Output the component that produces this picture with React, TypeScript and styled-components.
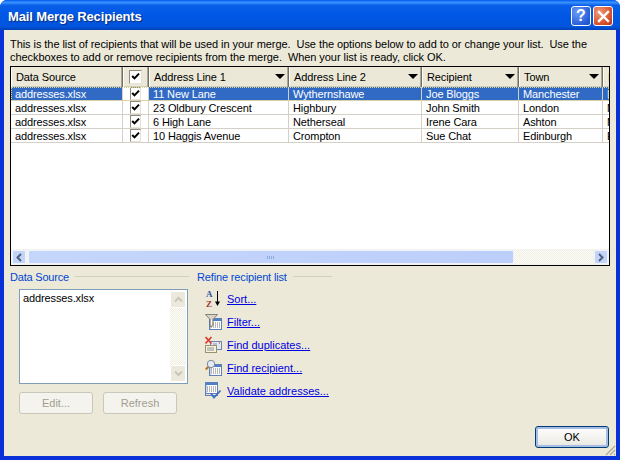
import React from 'react';
import styled, { createGlobalStyle } from 'styled-components';

const GlobalStyle = createGlobalStyle`
  html, body { margin: 0; padding: 0; background: #fff; }
  * { box-sizing: border-box; }
`;

type Col = { label: string; width: number; sort?: boolean };

const columns: Col[] = [
  { label: 'Data Source', width: 112 },
  { label: '', width: 26 },
  { label: 'Address Line 1', width: 140, sort: true },
  { label: 'Address Line 2', width: 133, sort: true },
  { label: 'Recipient', width: 97, sort: true },
  { label: 'Town', width: 84, sort: true },
  { label: 'I', width: 6 },
];

const rows = [
  ['addresses.xlsx', '11 New Lane', 'Wythernshawe', 'Joe Bloggs', 'Manchester', 'M'],
  ['addresses.xlsx', '23 Oldbury Crescent', 'Highbury', 'John Smith', 'London', 'M'],
  ['addresses.xlsx', '6 High Lane', 'Netherseal', 'Irene Cara', 'Ashton', 'M'],
  ['addresses.xlsx', '10 Haggis Avenue', 'Crompton', 'Sue Chat', 'Edinburgh', 'E'],
];

const Check = () => (
  <svg width="9" height="9" viewBox="0 0 9 9">
    <path d="M1.2 4l2.3 2.4L8 1.6" fill="none" stroke="#000" strokeWidth="2" />
  </svg>
);

const Arrow = () => (
  <svg width="10" height="5" viewBox="0 0 10 5">
    <path d="M0 0h10L5 5z" fill="#000" />
  </svg>
);

const SortIcon = () => (
  <svg width="18" height="18" viewBox="0 0 18 18">
    <text x="1" y="7" fontFamily="Liberation Serif" fontWeight="700" fontSize="9" fill="#2f55a8">A</text>
    <text x="1" y="17" fontFamily="Liberation Serif" fontWeight="700" fontSize="9" fill="#a33a30">Z</text>
    <path d="M12.5 1v13" stroke="#000" strokeWidth="1" />
    <path d="M10 11.5h5L12.5 16z" fill="#000" />
  </svg>
);

const Sheet = ({ x = 4, y = 5 }: { x?: number; y?: number }) => (
  <g transform={`translate(${x} ${y})`}>
    <rect x="0.5" y="0.5" width="12" height="11" fill="#fff" stroke="#5f7fb8" />
    <rect x="1" y="1" width="11" height="2" fill="#4f7fc8" />
    <path d="M2 5h10M2 7h10M2 9h10" stroke="#6d6d6d" strokeDasharray="1 1" />
    <rect x="1" y="3" width="1" height="8" fill="#c5d4ea" />
  </g>
);

const FilterIcon = () => (
  <svg width="18" height="18" viewBox="0 0 18 18">
    <Sheet />
    <path d="M0.5 1.5h12L8 6.5v6L5 14V6.5z" fill="#d6d3c8" stroke="#6f6c62" strokeWidth="0.8" />
    <path d="M6.5 7v5" stroke="#fff" />
  </svg>
);

const DuplicatesIcon = () => (
  <svg width="18" height="18" viewBox="0 0 18 18">
    <rect x="5.5" y="5.5" width="11" height="8" fill="#dfe8f6" stroke="#6f85ad" />
    <rect x="0.5" y="9.5" width="11" height="7" fill="#f7f1d8" stroke="#9a8f6e" />
    <path d="M2 12h7M2 14h7" stroke="#8d93a0" />
    <path d="M8 8h4" stroke="#8d93a0" />
    <path d="M14 7h1" stroke="#c22" />
    <path d="M0.5 1l6 6.5M6.5 1l-6 6.5" stroke="#dd3b2c" strokeWidth="1.7" />
  </svg>
);

const FindIcon = () => (
  <svg width="18" height="18" viewBox="0 0 18 18">
    <Sheet />
    <circle cx="6" cy="5" r="3.7" fill="#e4edf5" stroke="#7c8896" />
    <path d="M3.4 7.8L0.8 10.5" stroke="#b5762e" strokeWidth="2.2" />
  </svg>
);

const ValidateIcon = () => (
  <svg width="18" height="18" viewBox="0 0 18 18">
    <Sheet x={0} y={0} />
    <rect x="0.5" y="0.5" width="12" height="13" fill="none" stroke="#5f7fb8" />
    <path d="M6 11.5l3 4 6.5-7" fill="none" stroke="#3f6fc0" strokeWidth="1.8" />
  </svg>
);

const links = [
  { label: 'Sort...', icon: <SortIcon /> },
  { label: 'Filter...', icon: <FilterIcon /> },
  { label: 'Find duplicates...', icon: <DuplicatesIcon /> },
  { label: 'Find recipient...', icon: <FindIcon /> },
  { label: 'Validate addresses...', icon: <ValidateIcon /> },
];

const App = () => (
  <>
    <GlobalStyle />
    <Frame>
      <TitleBar>
        <Title>Mail Merge Recipients</Title>
        <HelpButton>?</HelpButton>
        <CloseButton>
          <svg width="13" height="13" viewBox="0 0 13 13">
            <path d="M2 2l9 9M11 2l-9 9" stroke="#fff" strokeWidth="2.4" strokeLinecap="square" />
          </svg>
        </CloseButton>
      </TitleBar>
      <Body>
        <Intro>
          This is the list of recipients that will be used in your merge.&nbsp; Use the options below to add to or change your list.&nbsp; Use the
          <br />
          checkboxes to add or remove recipients from the merge.&nbsp; When your list is ready, click OK.
        </Intro>
        <Grid>
          <HeaderRow>
            {columns.map((c, i) => (
              <HeaderCell key={i} $w={c.width}>
                {i === 1 ? <CheckBox $raised><Check /></CheckBox> : <span>{c.label}</span>}
                {c.sort && <Arrow />}
              </HeaderCell>
            ))}
          </HeaderRow>
          <RowList>
            {rows.map((r, i) => (
              <Row key={i} $selected={i === 0}>
                <Cell $w={columns[0].width}>{r[0]}</Cell>
                <CheckCell $w={columns[1].width}><CheckBox><Check /></CheckBox></CheckCell>
                {r.slice(1).map((v, j) => (
                  <Cell key={j} $w={columns[j + 2].width}>{v}</Cell>
                ))}
              </Row>
            ))}
          </RowList>
          <HScroll>
            <ScrollBtn><svg width="8" height="9" viewBox="0 0 8 9"><path d="M6 1L2.5 4.5 6 8" fill="none" stroke="#4d6185" strokeWidth="2" /></svg></ScrollBtn>
            <Thumb><Grip /></Thumb>
            <Track />
            <ScrollBtn><svg width="8" height="9" viewBox="0 0 8 9"><path d="M2 1l3.5 3.5L2 8" fill="none" stroke="#4d6185" strokeWidth="2" /></svg></ScrollBtn>
          </HScroll>
        </Grid>
        <Lower>
          <SourcePane>
            <GroupHead $line={114} $tight={0.2}>Data Source</GroupHead>
            <ListBox>
              <ListText>addresses.xlsx</ListText>
              <VScroll>
                <VBtn><svg width="9" height="7" viewBox="0 0 9 7"><path d="M1 5.5L4.5 2 8 5.5" fill="none" stroke="#c8c6ba" strokeWidth="2" /></svg></VBtn>
                <VTrack />
                <VBtn><svg width="9" height="7" viewBox="0 0 9 7"><path d="M1 1.5L4.5 5 8 1.5" fill="none" stroke="#c8c6ba" strokeWidth="2" /></svg></VBtn>
              </VScroll>
            </ListBox>
            <ButtonRow>
              <DisabledButton>Edit...</DisabledButton>
              <DisabledButton>Refresh</DisabledButton>
            </ButtonRow>
          </SourcePane>
          <RefinePane>
            <GroupHead $line={39} $tight={0.15}>Refine recipient list</GroupHead>
            <LinkList>
              {links.map((l) => (
                <LinkRow key={l.label}>
                  {l.icon}
                  <LinkText href="#">{l.label}</LinkText>
                </LinkRow>
              ))}
            </LinkList>
          </RefinePane>
        </Lower>
        <Footer>
          <OkButton>OK</OkButton>
        </Footer>
        <Gripper>
          <svg width="12" height="12" viewBox="0 0 12 12">
            <path d="M11 2L2 11M11 6l-5 5M11 10l-1 1" stroke="#aca899" strokeWidth="1.2" />
          </svg>
        </Gripper>
      </Body>
    </Frame>
  </>
);

export default App;

const Frame = styled.div`
  width: 620px;
  height: 460px;
  display: flex;
  flex-direction: column;
  overflow: hidden;
  border-radius: 7px 7px 0 0;
  background: #0831d9;
  font-family: 'Liberation Sans', Tahoma, sans-serif;
  font-size: 11px;
  color: #000;
`;

const TitleBar = styled.div`
  height: 30px;
  flex: none;
  display: flex;
  align-items: center;
  padding: 2px 7px 0 8px;
  gap: 2px;
  background: linear-gradient(180deg, #0058ee 0%, #3a93ff 8%, #0a5fe8 18%, #0058e6 50%, #0054dc 88%, #0040b8 100%);
`;

const Title = styled.div`
  flex: 1;
  color: #fff;
  font-size: 13px;
  font-weight: 700;
  letter-spacing: -0.14px;
  text-shadow: 1px 1px 1px #0f2a78;
`;

const HelpButton = styled.div`
  width: 20px;
  height: 20px;
  display: flex;
  align-items: center;
  justify-content: center;
  border: 1px solid #fff;
  border-radius: 3px;
  color: #fff;
  font-size: 16px;
  font-weight: 700;
  background: radial-gradient(circle at 30% 30%, #6d9cf5, #2a5ed8 70%, #1b44b8);
`;

const CloseButton = styled(HelpButton)`
  background: radial-gradient(circle at 30% 30%, #ee9a7a, #d9512c 65%, #b5321a);
`;

const Body = styled.div`
  position: relative;
  flex: 1;
  margin: 0 4px 4px 4px;
  padding: 0 6px;
  background: #ece9d8;
  display: flex;
  flex-direction: column;
`;

const Intro = styled.div`
  height: 36px;
  padding: 8px 0 0 0;
  line-height: 13px;
  letter-spacing: -0.06px;
  white-space: nowrap;
`;

const Grid = styled.div`
  width: 600px;
  height: 200px;
  flex: none;
  border: 1px solid #000;
  background: #fff;
  display: flex;
  flex-direction: column;
  overflow: hidden;
`;

const HeaderRow = styled.div`
  display: flex;
  height: 20px;
  flex: none;
  background: #ebe8d8;
  overflow: hidden;
  letter-spacing: -0.12px;
  box-shadow: inset 0 -1px 0 #d0cdbd;
`;

const HeaderCell = styled.div<{ $w: number }>`
  flex: none;
  width: ${(p) => p.$w}px;
  display: flex;
  align-items: center;
  justify-content: space-between;
  padding: 0 3px 1px 4px;
  border-left: 1px solid #fff;
  border-right: 1px solid #716f64;
  box-shadow: inset -1px 0 0 #aca899;
  overflow: hidden;
  white-space: nowrap;

  &:last-child {
    padding-right: 0;
    border-right: 0;
    box-shadow: none;
  }
`;

const RowList = styled.div`
  flex: 1;
`;

const Row = styled.div<{ $selected?: boolean }>`
  display: flex;
  height: 14px;
  border-bottom: 1px solid #d4d0c8;
  letter-spacing: -0.12px;
  background: ${(p) => (p.$selected ? '#316ac5' : '#fff')};
  color: ${(p) => (p.$selected ? '#fff' : '#000')};
  ${(p) => p.$selected && 'outline: 1px dotted #d9d48a; outline-offset: -1px;'}
`;

const Cell = styled.div<{ $w: number }>`
  flex: none;
  width: ${(p) => p.$w}px;
  padding-left: 4px;
  line-height: 14px;
  border-right: 1px solid #d4d0c8;
  overflow: hidden;
  white-space: nowrap;

  &:last-child {
    border-right: 0;
  }
`;

const CheckCell = styled.div<{ $w: number }>`
  flex: none;
  width: ${(p) => p.$w}px;
  display: flex;
  align-items: center;
  justify-content: center;
  background: #fff;
  border-right: 1px solid #d4d0c8;
`;

const CheckBox = styled.div<{ $raised?: boolean }>`
  width: ${(p) => (p.$raised ? 13 : 11)}px;
  height: ${(p) => (p.$raised ? 14 : 13)}px;
  margin-left: ${(p) => (p.$raised ? 1 : 0)}px;
  display: flex;
  align-items: center;
  justify-content: center;
  background: #fff;
  border-top: 1px solid #8e8c7f;
  border-left: 1px solid #8e8c7f;
  border-right: 1px solid #e6e3d3;
  border-bottom: 1px solid #e6e3d3;
`;

const HScroll = styled.div`
  height: 16px;
  flex: none;
  display: flex;
  background: #f4f3ec;
  padding: 1px 0;
`;

const ScrollBtn = styled.div`
  width: 14px;
  flex: none;
  margin: 0 1px;
  display: flex;
  align-items: center;
  justify-content: center;
  border: 1px solid #eef3ff;
  border-radius: 2px;
  background: #c3d4f7;

  &:first-child {
    margin-right: 2px;
  }
`;

const Thumb = styled.div`
  width: 486px;
  flex: none;
  display: flex;
  align-items: center;
  justify-content: center;
  border: 1px solid #eef3ff;
  border-radius: 2px;
  background: linear-gradient(90deg, #c5d6fb, #bccffa);
`;

const Grip = styled.div`
  width: 8px;
  height: 3px;
  background: repeating-linear-gradient(90deg, #8faae8 0 1px, transparent 1px 2px);
`;

const Track = styled.div`
  flex: 1;
  background: repeating-conic-gradient(#fdfdfa 0 25%, #f0eee3 0 50%) 0 0 / 2px 2px;
`;

const Lower = styled.div`
  display: flex;
  margin-top: 4px;
`;

const SourcePane = styled.div`
  width: 187px;
  flex: none;
`;

const RefinePane = styled.div`
  flex: 1;
`;

const GroupHead = styled.div<{ $line: number; $tight: number }>`
  display: flex;
  align-items: center;
  gap: 6px;
  height: 13px;
  color: #0046d5;
  letter-spacing: -${(p) => p.$tight}px;
  white-space: nowrap;

  &::after {
    content: '';
    width: ${(p) => p.$line}px;
    height: 1px;
    background: #d0d0bf;
  }
`;

const ListBox = styled.div`
  margin: 6px 0 0 9px;
  width: 169px;
  height: 95px;
  display: flex;
  padding: 1px;
  border: 1px solid #7f9db9;
  background: #fff;
`;

const ListText = styled.div`
  flex: 1;
  padding: 1px 0 0 2px;
  letter-spacing: -0.12px;
`;

const VScroll = styled.div`
  width: 16px;
  flex: none;
  display: flex;
  flex-direction: column;
  background: repeating-conic-gradient(#fdfdfa 0 25%, #f0eee3 0 50%) 0 0 / 2px 2px;
`;

const VBtn = styled.div`
  height: 17px;
  flex: none;
  display: flex;
  align-items: center;
  justify-content: center;
  border: 1px solid #fff;
  border-radius: 2px;
  background: #ece9dc;
`;

const VTrack = styled.div`
  flex: 1;
`;

const ButtonRow = styled.div`
  display: flex;
  gap: 10px;
  margin: 8px 0 0 9px;
`;

const DisabledButton = styled.div`
  width: 74px;
  height: 22px;
  display: flex;
  align-items: center;
  justify-content: center;
  border: 1px solid #c9c7ba;
  border-radius: 3px;
  background: #f4f3ee;
  color: #a19e8f;
`;

const LinkList = styled.div`
  margin: 7px 0 0 8px;
  display: flex;
  flex-direction: column;
  gap: 5px;
`;

const LinkRow = styled.div`
  height: 18px;
  display: flex;
  align-items: center;
  gap: 4px;
`;

const LinkText = styled.a`
  color: #0000e0;
  text-decoration: underline;
`;

const Footer = styled.div`
  flex: 1;
  display: flex;
  justify-content: flex-end;
  align-items: flex-end;
  padding: 0 1px 8px 0;
`;

const OkButton = styled.div`
  width: 74px;
  height: 22px;
  display: flex;
  align-items: center;
  justify-content: center;
  border: 1px solid #003c74;
  border-radius: 3px;
  background: linear-gradient(180deg, #fff, #ecebe5 85%, #d6d0c5);
  box-shadow: inset 0 0 0 2px #a6bde8;
`;

const Gripper = styled.div`
  position: absolute;
  right: 0;
  bottom: 0;
  width: 12px;
  height: 12px;
  display: flex;
`;
